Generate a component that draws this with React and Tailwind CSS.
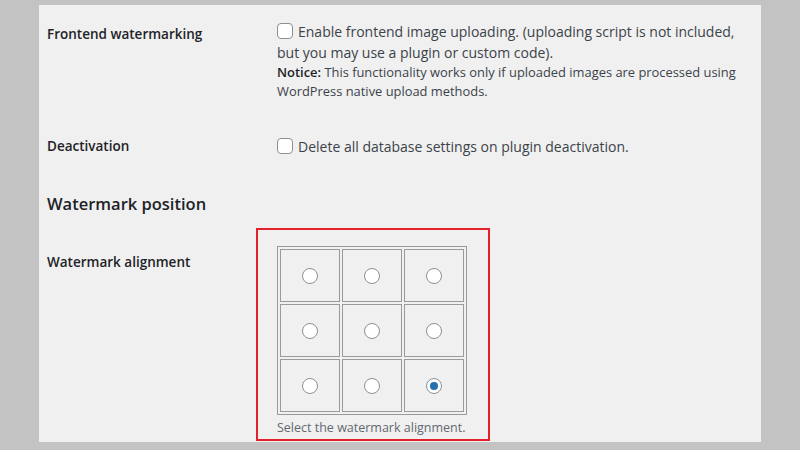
import React, { useState } from "react";

function Checkbox() {
  return (
    <span className="inline-block w-[16px] h-[16px] shrink-0 rounded-[4px] border border-[#8c8f94] bg-white mt-[2px]" />
  );
}

function Radio({ checked, onClick }) {
  return (
    <span
      onClick={onClick}
      className="w-[16px] h-[16px] rounded-full border border-[#8c8f94] bg-white flex items-center justify-center cursor-pointer"
    >
      {checked && <span className="w-[8px] h-[8px] rounded-full bg-[#2271b1]" />}
    </span>
  );
}

function App() {
  const [pos, setPos] = useState(8);

  return (
    <div
      className="w-[800px] h-[450px] bg-[#c3c3c3] pt-[5px] pl-[39px] overflow-hidden text-[#1d2327]"
      style={{ fontFamily: '"Open Sans", "Noto Sans", sans-serif' }}
    >
      <div className="w-[722px] h-[437px] bg-[#f0f0f0] pl-[8px] overflow-hidden">
        {/* frontend watermarking */}
        <div className="flex pt-[16px]">
          <div className="w-[230px] pt-[3px] text-[13.5px] leading-[21px] font-semibold">Frontend watermarking</div>
          <div className="w-[475px]">
            <div className="flex gap-[5px] text-[#3c434a]">
              <Checkbox />
              <div className="text-[14px] leading-[21px]">
                Enable frontend image uploading. (uploading script is not included,
              </div>
            </div>
            <div className="text-[14px] leading-[21px] text-[#3c434a]">
              but you may use a plugin or custom code).
            </div>
            <p className="text-[12.9px] leading-[19px] text-[#3c434a]">
              <strong className="font-semibold text-[#1d2327]">Notice:</strong>
              {" This functionality works only if uploaded images are processed using WordPress native upload methods."}
            </p>
          </div>
        </div>

        {/* deactivation */}
        <div className="flex pt-[35px]">
          <div className="w-[230px] text-[13.5px] leading-[21px] font-semibold">Deactivation</div>
          <div className="flex gap-[5px] text-[#3c434a]">
            <Checkbox />
            <div className="text-[14px] leading-[21px]">Delete all database settings on plugin deactivation.</div>
          </div>
        </div>

        {/* heading */}
        <h2 className="mt-[35px] text-[16.5px] leading-[24px] font-semibold">Watermark position</h2>

        {/* alignment */}
        <div className="flex mt-[12px]">
          <div className="w-[209px] pt-[24px] text-[13.5px] leading-[21px] font-semibold">Watermark alignment</div>
          <div className="w-[234px] h-[213px] border-2 border-[#e4202b] pt-[16px] pl-[19px]">
            <table className="border border-[#9a9a9a] border-separate border-spacing-[2px]">
              <tbody>
                {[0, 1, 2].map((r) => (
                  <tr key={r}>
                    {[0, 1, 2].map((c) => {
                      const i = r * 3 + c;
                      return (
                        <td key={c} className="w-[60px] h-[53px] border border-[#9a9a9a] p-0">
                          <div className="flex items-center justify-center">
                            <Radio checked={pos === i} onClick={() => setPos(i)} />
                          </div>
                        </td>
                      );
                    })}
                  </tr>
                ))}
              </tbody>
            </table>
            <div className="mt-[3px] text-[12.5px] leading-[19px] text-[#646970]">Select the watermark alignment.</div>
          </div>
        </div>
      </div>
    </div>
  );
}

export default App;
